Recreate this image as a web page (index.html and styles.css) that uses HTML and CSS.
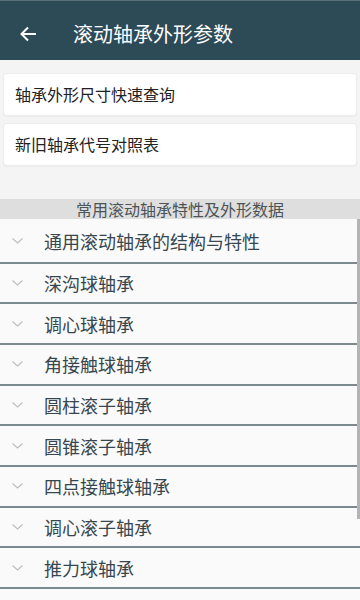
FILE: index.html
```html
<!DOCTYPE html>
<html lang="zh">
<head>
<meta charset="utf-8">
<link rel="stylesheet" href="styles.css">
</head>
<body>
<div class="app">
  <header class="bar">
    <svg class="back" width="18" height="18" viewBox="0 0 18 18"><path d="M17 9H2.5M9 2.5L2.5 9L9 15.5" fill="none" stroke="#fff" stroke-width="2"/></svg>
    <h1 class="title">滚动轴承外形参数</h1>
  </header>
  <section class="top">
    <div class="card">轴承外形尺寸快速查询</div>
    <div class="card">新旧轴承代号对照表</div>
  </section>
  <div class="section">常用滚动轴承特性及外形数据</div>
  <div class="list">
    <div class="row first"><svg class="chev" width="11" height="6" viewBox="0 0 11 6"><path d="M0.5 0.5L5.5 5L10.5 0.5" fill="none" stroke="#bdbdbd" stroke-width="1.1"/></svg><span>通用滚动轴承的结构与特性</span></div>
    <div class="row"><svg class="chev" width="11" height="6" viewBox="0 0 11 6"><path d="M0.5 0.5L5.5 5L10.5 0.5" fill="none" stroke="#bdbdbd" stroke-width="1.1"/></svg><span>深沟球轴承</span></div>
    <div class="row"><svg class="chev" width="11" height="6" viewBox="0 0 11 6"><path d="M0.5 0.5L5.5 5L10.5 0.5" fill="none" stroke="#bdbdbd" stroke-width="1.1"/></svg><span>调心球轴承</span></div>
    <div class="row"><svg class="chev" width="11" height="6" viewBox="0 0 11 6"><path d="M0.5 0.5L5.5 5L10.5 0.5" fill="none" stroke="#bdbdbd" stroke-width="1.1"/></svg><span>角接触球轴承</span></div>
    <div class="row"><svg class="chev" width="11" height="6" viewBox="0 0 11 6"><path d="M0.5 0.5L5.5 5L10.5 0.5" fill="none" stroke="#bdbdbd" stroke-width="1.1"/></svg><span>圆柱滚子轴承</span></div>
    <div class="row"><svg class="chev" width="11" height="6" viewBox="0 0 11 6"><path d="M0.5 0.5L5.5 5L10.5 0.5" fill="none" stroke="#bdbdbd" stroke-width="1.1"/></svg><span>圆锥滚子轴承</span></div>
    <div class="row"><svg class="chev" width="11" height="6" viewBox="0 0 11 6"><path d="M0.5 0.5L5.5 5L10.5 0.5" fill="none" stroke="#bdbdbd" stroke-width="1.1"/></svg><span>四点接触球轴承</span></div>
    <div class="row"><svg class="chev" width="11" height="6" viewBox="0 0 11 6"><path d="M0.5 0.5L5.5 5L10.5 0.5" fill="none" stroke="#bdbdbd" stroke-width="1.1"/></svg><span>调心滚子轴承</span></div>
    <div class="row"><svg class="chev" width="11" height="6" viewBox="0 0 11 6"><path d="M0.5 0.5L5.5 5L10.5 0.5" fill="none" stroke="#bdbdbd" stroke-width="1.1"/></svg><span>推力球轴承</span></div>
    <div class="scroll"></div>
  </div>
</div>
</body>
</html>
```
FILE: styles.css
```css
html, body { margin: 0; padding: 0; }
body {
  width: 360px; height: 600px; overflow: hidden;
  background: #f4f4f4;
  font-family: "Noto Sans CJK SC", "Noto Sans", sans-serif;
}
.app { display: flex; flex-direction: column; height: 600px; }
.bar {
  height: 60px; flex: none;
  background: #2d4a57;
  border-top: 1px solid #5a7078;
  box-sizing: border-box;
  display: flex; align-items: center;
  padding-top: 6px;
}
.back { margin-left: 19px; flex: none; }
.title {
  margin: 0 0 0 36px;
  font-size: 20px; font-weight: 400; color: #fff;
  line-height: 24px;
}
.top {
  display: flex; flex-direction: column; gap: 9px;
  padding: 14px 4px 34px 4px;
}
.card {
  height: 41px; box-sizing: border-box;
  background: #fff;
  border-radius: 3px;
  box-shadow: 0 0 0 1px #ececec, 0 1px 2px rgba(0,0,0,0.12);
  display: flex; align-items: center;
  padding: 0 11px 2px;
  font-size: 16px; color: #222;
}
.section {
  height: 20px; flex: none;
  background: #dedede;
  text-align: center;
  font-size: 16px; line-height: 20px; color: #4b5457;
}
.list {
  position: relative;
  background: #fafafa;
  flex: 1;
  padding-top: 1px;
  overflow: hidden;
}
.row {
  height: 38.7px; box-sizing: content-box;
  border-bottom: 2px solid #7a8a8f;
  display: flex; align-items: center;
  font-size: 18px; color: #37474f;
}
.row.first { height: 41.5px; }
.chev {
  flex: none;
  margin: 0 21px 0 12px;
}
.scroll {
  position: absolute; right: 0; top: 0;
  width: 3px; height: 300px;
  background: #b4b4b4;
}
```
